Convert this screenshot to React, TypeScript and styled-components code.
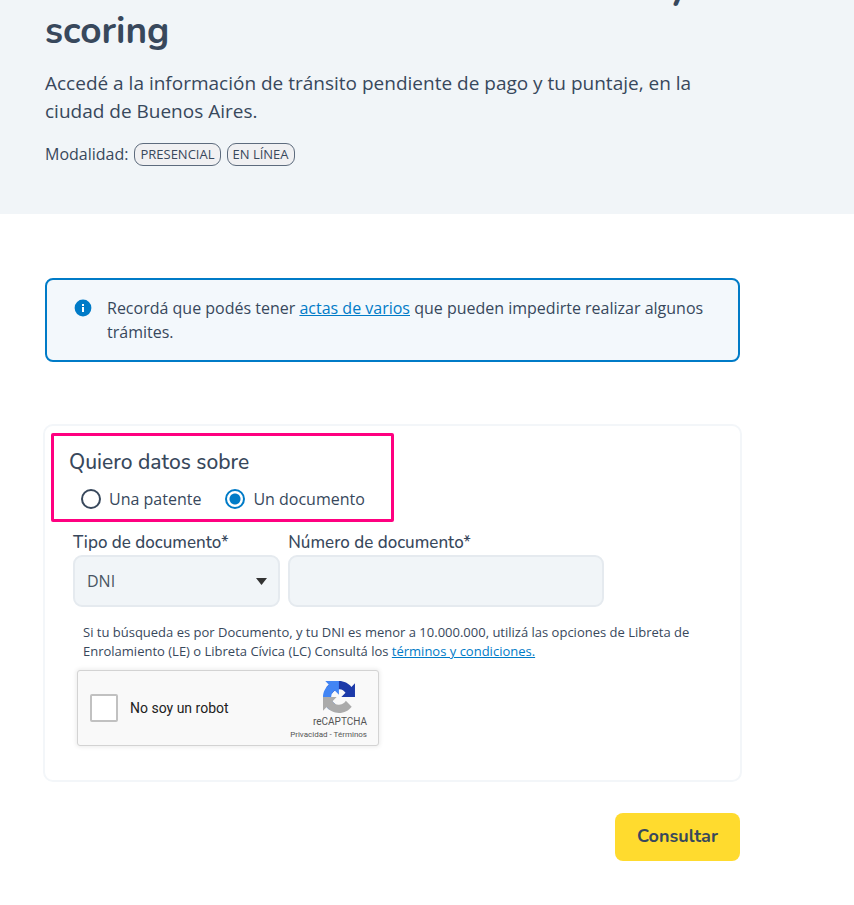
import React from "react";
import styled, { createGlobalStyle } from "styled-components";

const ink = "#38485c";
const blue = "#007bc7";
const bodyFont = `"Open Sans", "Noto Sans", sans-serif`;
const headingFont = `"Nunito", "Noto Sans", sans-serif`;

const GlobalStyle = createGlobalStyle`
  *, *::before, *::after { box-sizing: border-box; }
  body {
    margin: 0;
    background: #fff;
    color: ${ink};
    font: 400 16px/24px ${bodyFont};
  }
`;

const Header = styled.header`
  background: #f1f5f8;
  padding: 0 114px 47px 45px;
  overflow: hidden;
`;

const Title = styled.h1`
  margin: -35px 0 16px;
  font: 700 37px/44px ${headingFont};
`;

const TitleEnd = styled.span`
  display: block;
  padding-right: 52px;
  text-align: right;
`;

const Lead = styled.p`
  margin: 0 0 16px;
  font-size: 19px;
  line-height: 28px;
`;

const Modes = styled.div`
  display: flex;
  align-items: center;
  gap: 6px;
  line-height: 26px;
`;

const ModeBadge = styled.span`
  padding: 0 5px;
  border: 1px solid #5d6b7d;
  border-radius: 9px;
  background: #f0f0f2;
  font-size: 13px;
  line-height: 21px;
`;

const Main = styled.main`
  padding: 64px 114px 45px 45px;
`;

const Link = styled.a`
  color: ${blue};
  text-decoration: underline;
  text-underline-offset: 1px;
`;

const Alert = styled.div`
  display: flex;
  gap: 16px;
  padding: 16px 28px;
  border: 2px solid ${blue};
  border-radius: 8px;
  background: #f3f8fc;

  svg { flex: none; margin-top: 3px; }
  p { margin: 0; }
`;

const Card = styled.section`
  margin: 62px -2px 31px;
  padding: 7px 6px 34px;
  border: 2px solid #f3f6f9;
  border-radius: 10px;
`;

const Subject = styled.fieldset`
  width: fit-content;
  margin: 0;
  padding: 12px 26px 8px 15px;
  border: 3px solid #ff0080;
  border-radius: 2px;
`;

const SubjectTitle = styled.legend`
  float: left;
  width: 100%;
  padding: 0;
  font: 500 21px/28px ${headingFont};
`;

const RadioRow = styled.div`
  clear: both;
  display: flex;
  gap: 24px;
  padding: 11px 0 0 12px;
`;

const RadioLabel = styled.label`
  display: flex;
  align-items: center;
  gap: 8px;
`;

const Radio = styled.input`
  appearance: none;
  width: 20px;
  height: 20px;
  margin: 0;
  border: 2px solid ${ink};
  border-radius: 50%;
  background: #fff;

  &:checked {
    border-color: ${blue};
    background: radial-gradient(circle, ${blue} 5px, #fff 6px);
  }
`;

const Fields = styled.div`
  display: grid;
  grid-template-columns: 21fr 32fr;
  gap: 8px;
  padding: 9px 130px 0 22px;
`;

const Field = styled.div`
  display: flex;
  flex-direction: column;
`;

const FieldLabel = styled.label`
  font: 500 17px/24px ${headingFont};
  white-space: nowrap;
`;

const SelectBox = styled.div`
  display: grid;
  align-items: center;

  > * { grid-area: 1 / 1; }
  svg { justify-self: end; margin-right: 13px; pointer-events: none; }
`;

const controlStyle = `
  width: 100%;
  height: 52px;
  padding: 0 12px;
  border: 2px solid #e5eaef;
  border-radius: 9px;
  background: #f1f5f8;
  color: #4a5563;
  font: 400 16px/24px ${bodyFont};
`;

const Select = styled.select`
  appearance: none;
  ${controlStyle}
`;

const TextInput = styled.input`
  ${controlStyle}
`;

const Note = styled.p`
  margin: 16px 32px 9px;
  font-size: 13px;
  line-height: 19px;
`;

const Captcha = styled.div`
  display: flex;
  align-items: center;
  justify-content: space-between;
  width: 302px;
  height: 76px;
  margin-left: 26px;
  padding: 0 11px 0 12px;
  border: 1px solid #d3d3d3;
  border-radius: 3px;
  background: #f9f9f9;
  box-shadow: 0 0 4px 1px rgba(0, 0, 0, 0.08);
  color: #222;
  font: 400 14px/18px Roboto, sans-serif;
`;

const CaptchaLabel = styled.label`
  display: flex;
  align-items: center;
  gap: 12px;
`;

const CaptchaCheck = styled.input`
  appearance: none;
  width: 28px;
  height: 28px;
  margin: 0;
  border: 2px solid #c1c1c1;
  border-radius: 2px;
  background: #fff;
`;

const CaptchaBrand = styled.div`
  display: flex;
  flex-direction: column;
  align-items: flex-end;
  padding-top: 6px;
  color: #555;
  font-size: 10px;
  line-height: 14px;

  svg { margin: 0 12px 2px 0; }
`;

const CaptchaLinks = styled.div`
  font-size: 8px;
  line-height: 12px;

  a { color: inherit; text-decoration: none; }
`;

const Actions = styled.div`
  display: flex;
  justify-content: flex-end;
`;

const SubmitButton = styled.button`
  height: 48px;
  padding: 0 22px 2px;
  border: 0;
  border-radius: 8px;
  background: #ffdb2e;
  color: ${ink};
  font: 700 18px/24px ${headingFont};
`;

const InfoIcon = () => (
  <svg width="16" height="18" viewBox="0 0 16 18" overflow="visible" aria-hidden="true">
    <circle cx="8" cy="9" r="8.4" fill={blue} />
    <path d="M7 5h2v2H7zM7 8h2v5H7z" fill="#fff" />
  </svg>
);

const CaptchaLogo = () => (
  <svg width="32" height="32" viewBox="0 0 64 64" aria-hidden="true">
    <path
      fill="#1c3aa9"
      d="M64 31.955l-.033-1.37V4.687l-7.16 7.16C50.948 4.674 42.033.093 32.05.093c-10.4 0-19.622 4.96-25.458 12.64l11.736 11.86a15.55 15.55 0 0 1 4.754-5.334c2.05-1.6 4.952-2.906 8.968-2.906.485 0 .86.057 1.135.163 4.976.393 9.288 3.14 11.828 7.124l-8.307 8.307L64 31.953"
    />
    <path
      fill="#4285f4"
      d="M31.862.094l-1.37.033H4.594l7.16 7.16C4.58 13.147 0 22.06 0 32.046c0 10.4 4.96 19.622 12.64 25.458L24.5 45.768a15.55 15.55 0 0 1-5.334-4.754c-1.6-2.05-2.906-4.952-2.906-8.968 0-.485.057-.86.163-1.135.393-4.976 3.14-9.288 7.124-11.828l8.307 8.307L31.86.095"
    />
    <path
      fill="#ababab"
      d="M.001 32.045l.033 1.37v25.898l7.16-7.16c5.86 7.173 14.774 11.754 24.76 11.754 10.4 0 19.622-4.96 25.458-12.64l-11.736-11.86a15.55 15.55 0 0 1-4.754 5.334c-2.05 1.6-4.952 2.906-8.968 2.906-.485 0-.86-.057-1.135-.163-4.976-.393-9.288-3.14-11.828-7.124l8.307-8.307c-10.522.04-22.4.066-27.295-.005"
    />
  </svg>
);

export default function App() {
  return (
    <>
      <GlobalStyle />
      <Header>
        <Title>
          <TitleEnd>y</TitleEnd>
          scoring
        </Title>
        <Lead>
          Accedé a la información de tránsito pendiente de pago y tu puntaje, en la ciudad de Buenos Aires.
        </Lead>
        <Modes>
          <span>Modalidad:</span>
          <ModeBadge>PRESENCIAL</ModeBadge>
          <ModeBadge>EN LÍNEA</ModeBadge>
        </Modes>
      </Header>
      <Main>
        <Alert role="note">
          <InfoIcon />
          <p>
            Recordá que podés tener <Link href="#actas">actas de varios</Link> que pueden impedirte realizar
            algunos trámites.
          </p>
        </Alert>
        <form onSubmit={(event) => event.preventDefault()}>
          <Card>
            <Subject>
              <SubjectTitle>Quiero datos sobre</SubjectTitle>
              <RadioRow>
                <RadioLabel>
                  <Radio type="radio" name="subject" value="patente" />
                  Una patente
                </RadioLabel>
                <RadioLabel>
                  <Radio type="radio" name="subject" value="documento" defaultChecked />
                  Un documento
                </RadioLabel>
              </RadioRow>
            </Subject>
            <Fields>
              <Field>
                <FieldLabel htmlFor="doc-type">Tipo de documento*</FieldLabel>
                <SelectBox>
                  <Select id="doc-type" defaultValue="DNI">
                    <option>DNI</option>
                  </Select>
                  <svg width="11" height="7" viewBox="0 0 11 7" aria-hidden="true">
                    <path d="M0 0h11L5.500 7z" fill="#333" />
                  </svg>
                </SelectBox>
              </Field>
              <Field>
                <FieldLabel htmlFor="doc-number">Número de documento*</FieldLabel>
                <TextInput id="doc-number" type="text" inputMode="numeric" />
              </Field>
            </Fields>
            <Note>
              Si tu búsqueda es por Documento, y tu DNI es menor a 10.000.000, utilizá las opciones de Libreta de
              Enrolamiento (LE) o Libreta Cívica (LC) Consultá los{" "}
              <Link href="#terminos">términos y condiciones.</Link>
            </Note>
            <Captcha>
              <CaptchaLabel>
                <CaptchaCheck type="checkbox" />
                No soy un robot
              </CaptchaLabel>
              <CaptchaBrand>
                <CaptchaLogo />
                <span>reCAPTCHA</span>
                <CaptchaLinks>
                  <a href="#privacidad">Privacidad</a> - <a href="#condiciones">Términos</a>
                </CaptchaLinks>
              </CaptchaBrand>
            </Captcha>
          </Card>
          <Actions>
            <SubmitButton type="submit">Consultar</SubmitButton>
          </Actions>
        </form>
      </Main>
    </>
  );
}
